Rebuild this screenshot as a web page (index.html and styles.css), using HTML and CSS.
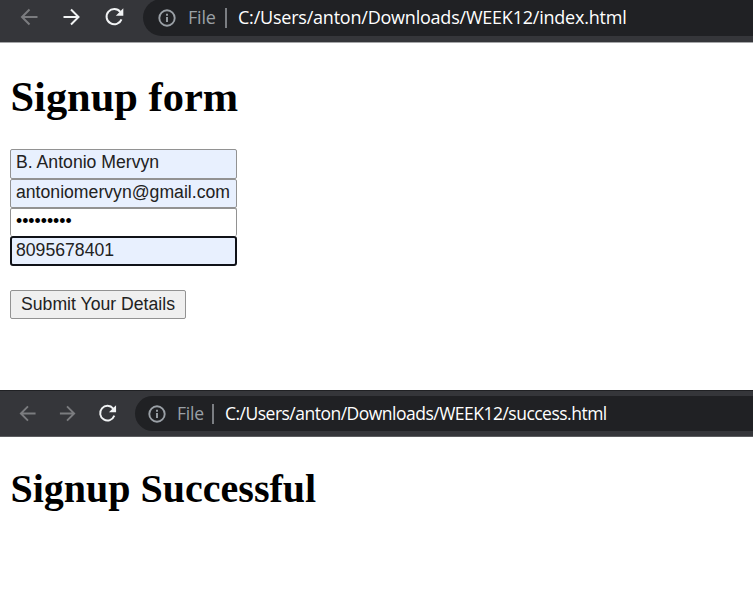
FILE: index.html
```html
<!DOCTYPE html>
<html lang="en">
<head>
<meta charset="utf-8">
<title>Signup form</title>
<link rel="stylesheet" href="styles.css">
</head>
<body>
<section class="window signup">
  <header class="toolbar">
    <svg class="icon dim" viewBox="0 0 20 20"><path d="M18.500 10H3M10.500 2.500L3 10l7.500 7.500"/></svg>
    <svg class="icon" viewBox="0 0 20 20"><path d="M1.500 10h15M9 2.500l7.500 7.500-7.500 7.500"/></svg>
    <svg class="icon" viewBox="0 0 20 20"><path d="M15.300 4.800A7.700 7.700 0 1 0 16.500 12.300"/><path class="fill" d="M18.300 1.300v7.500h-7.500z"/></svg>
    <div class="address">
      <svg class="info" viewBox="0 0 18 18"><circle cx="9" cy="9" r="7.700"/><path d="M9 8v5M9 4.700v2"/></svg>
      <span class="scheme">File</span><span class="divider"></span><span class="url">C:/Users/anton/Downloads/WEEK12/index.html</span>
    </div>
  </header>
  <main class="page">
    <h1>Signup form</h1>
    <form class="form">
      <input class="filled" type="text" value="B. Antonio Mervyn">
      <input class="filled email" type="text" value="antoniomervyn@gmail.com">
      <input class="secret" type="password" value="123456789">
      <input class="filled active" type="text" value="8095678401">
      <button type="button">Submit Your Details</button>
    </form>
  </main>
</section>
<section class="window success">
  <header class="toolbar">
    <svg class="icon dim" viewBox="0 0 20 20"><path d="M18.500 10H3M10.500 2.500L3 10l7.500 7.500"/></svg>
    <svg class="icon dim" viewBox="0 0 20 20"><path d="M2 10h15M9.500 2.500l7.500 7.500-7.500 7.500"/></svg>
    <svg class="icon" viewBox="0 0 20 20"><path d="M16 4.800A7.700 7.700 0 1 0 17.200 12.300"/><path class="fill" d="M19 1.300v7.500h-7.500z"/></svg>
    <div class="address">
      <svg class="info" viewBox="0 0 18 18"><circle cx="9" cy="9" r="7.700"/><path d="M9 8v5M9 4.700v2"/></svg>
      <span class="scheme">File</span><span class="divider"></span><span class="url">C:/Users/anton/Downloads/WEEK12/success.html</span>
    </div>
  </header>
  <main class="page">
    <h1>Signup Successful</h1>
  </main>
</section>
</body>
</html>
```
FILE: styles.css
```css
* { box-sizing: border-box; }
body { margin: 0; background: #fff; color: #000; overflow: hidden; }
.signup { height: 390px; }
.success { height: 209px; }
.toolbar { display: flex; align-items: flex-start; background: #35363a; overflow: hidden; }
.signup .toolbar { height: 43px; padding-left: 19px; border-bottom: 1px solid #a5a6a8; }
.success .toolbar { height: 47px; padding-left: 18px; border-top: 1px solid #202124; border-bottom: 1px solid #5c5d60; }
.icon { flex: none; width: 20px; height: 20px; margin: 7px 23px 0 0; fill: none; stroke: #f1f3f4; stroke-width: 2; }
.success .icon { width: 19px; height: 19px; margin: 13px 21px 0 0; }
.toolbar .dim { stroke: #7b7c7f; }
.icon .fill { fill: #f1f3f4; stroke: none; }
.address { flex: 1; display: flex; align-items: center; background: #202124; font-family: "Open Sans", "Noto Sans", sans-serif; white-space: nowrap; }
.signup .address { height: 37px; margin: -1px 0 0 -5px; padding-left: 15px; border-radius: 19px 0 0 19px; font-size: 18px; }
.success .address { height: 35px; margin: 5px 0 0 -3px; padding-left: 13px; border-radius: 18px 0 0 18px; font-size: 17.500px; }
.info { flex: none; width: 18px; height: 18px; fill: none; stroke: #9aa0a6; stroke-width: 1.900; }
.scheme { width: 28px; margin-left: 12px; color: #9aa0a6; letter-spacing: -0.200px; }
.scheme, .url { padding-bottom: 1px; }
.success .scheme, .success .url { padding-bottom: 2px; }
.divider { width: 2px; height: 20px; margin: 0 11px 0 9px; background: #7b7e82; }
.success .scheme { width: 27px; margin-left: 11px; }
.success .divider { margin: 0 11px 0 8px; }
.url { color: #fff; letter-spacing: -0.220px; }
.success .url { letter-spacing: -0.510px; }
h1 { margin: 0; font: bold 42.450px/48px "Liberation Serif", serif; }
.page { padding: 30px 0 0 10.500px; }
.success .page { padding-top: 29px; }
.success h1 { font-size: 40px; line-height: 46px; }
.form { display: flex; flex-direction: column; align-items: flex-start; margin: 28px 0 0 -0.500px; }
input, button { font: 17.650px/20px "Liberation Sans", sans-serif; color: #222; border: 1.500px solid #929292; border-radius: 2px; outline: 0; }
input { width: 227px; height: 29px; margin: 0; padding: 0 4px 3px 5px; background: #fff; }
.form .filled { background: #e8f0fe; height: 30px; }
.form .email { height: 29px; padding-bottom: 2px; }
.form .secret { height: 28px; border-bottom: 0; color: #000; }
.form .active { height: 30px; padding: 0 4px 1px; border: 2px solid #101218; border-radius: 3px; }
button { width: 176px; height: 29px; margin-top: 24px; padding: 0 0 2px; background: #efefef; white-space: nowrap; }
```
